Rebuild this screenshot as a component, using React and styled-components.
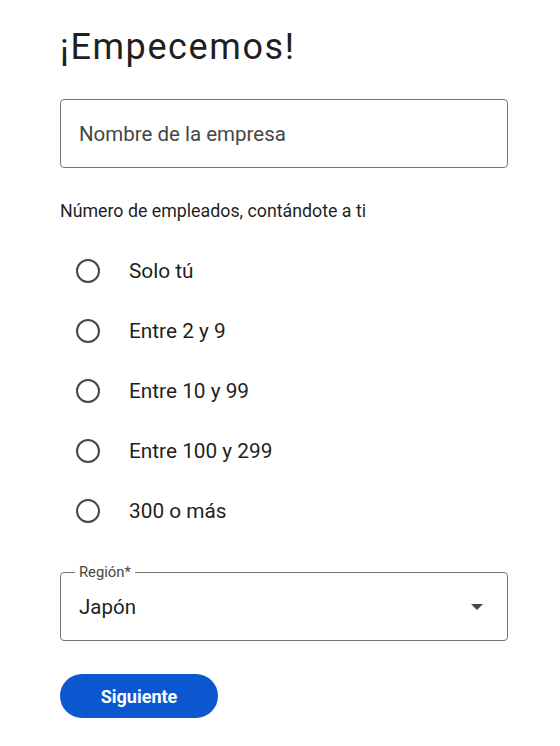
import React, { useState } from "react";
import styled, { createGlobalStyle } from "styled-components";

const GlobalStyle = createGlobalStyle`
  html, body {
    margin: 0;
    padding: 0;
    background: #ffffff;
  }
  body {
    font-family: Roboto, "Liberation Sans", sans-serif;
    color: #1f1f1f;
  }
`;

const options = ["Solo tú", "Entre 2 y 9", "Entre 10 y 99", "Entre 100 y 299", "300 o más"];

const App = () => {
  const [size, setSize] = useState(null);

  return (
    <>
      <GlobalStyle />
      <Page>
        <Title>¡Empecemos!</Title>

        <Field>
          <TextInput placeholder="Nombre de la empresa" />
        </Field>

        <GroupLabel>Número de empleados, contándote a ti</GroupLabel>
        <RadioList>
          {options.map((o) => (
            <RadioRow key={o} onClick={() => setSize(o)}>
              <RadioCircle checked={size === o} />
              <RadioText>{o}</RadioText>
            </RadioRow>
          ))}
        </RadioList>

        <SelectBox>
          <Legend>Región*</Legend>
          <SelectValue>Japón</SelectValue>
          <Arrow viewBox="0 0 12 6" aria-hidden="true">
            <path d="M0 0h12L6 6z" fill="#444746" />
          </Arrow>
        </SelectBox>

        <NextButton>Siguiente</NextButton>
      </Page>
    </>
  );
};

const Page = styled.div`
  display: flex;
  flex-direction: column;
  align-items: flex-start;
  padding: 27px 0 0 60px;
  width: 448px;
`;

const Title = styled.h1`
  margin: 0;
  font-family: Roboto, "Liberation Sans", sans-serif;
  font-size: 36px;
  line-height: 40px;
  font-weight: 400;
  letter-spacing: 1.6px;
  color: #1f1f1f;
`;

const Field = styled.div`
  margin-top: 32px;
  width: 100%;
`;

const TextInput = styled.input`
  box-sizing: border-box;
  width: 100%;
  height: 69px;
  border: 1px solid #747775;
  border-radius: 4px;
  padding: 0 18px;
  font-family: Roboto, "Liberation Sans", sans-serif;
  font-size: 20.5px;
  color: #1f1f1f;
  outline: none;
  &::placeholder {
    color: #444746;
  }
`;

const GroupLabel = styled.div`
  margin-top: 33px;
  font-size: 17.8px;
  line-height: 20px;
  color: #1f1f1f;
`;

const RadioList = styled.div`
  display: flex;
  flex-direction: column;
  margin-top: 20px;
`;

const RadioRow = styled.label`
  display: flex;
  align-items: center;
  height: 60px;
  padding-left: 16px;
  cursor: pointer;
`;

const RadioCircle = styled.span`
  box-sizing: border-box;
  width: 24px;
  height: 24px;
  border-radius: 50%;
  border: 2px solid #444746;
  position: relative;
  &::after {
    content: "";
    display: ${({ checked }) => (checked ? "block" : "none")};
    position: absolute;
    inset: 4px;
    border-radius: 50%;
    background: #0b57d0;
  }
`;

const RadioText = styled.span`
  margin-left: 29px;
  font-size: 20.8px;
  line-height: 24px;
  color: #1f1f1f;
`;

const SelectBox = styled.div`
  position: relative;
  box-sizing: border-box;
  margin-top: 31px;
  width: 100%;
  height: 69px;
  border: 1px solid #747775;
  border-radius: 4px;
  display: flex;
  align-items: center;
  justify-content: space-between;
  padding: 0 24px 0 18px;
`;

const Legend = styled.span`
  position: absolute;
  top: -10px;
  left: 14px;
  padding: 0 4px;
  background: #ffffff;
  font-size: 14.8px;
  line-height: 18px;
  color: #444746;
`;

const SelectValue = styled.span`
  font-size: 20.5px;
  color: #1f1f1f;
`;

const Arrow = styled.svg`
  width: 12px;
  height: 6px;
`;

const NextButton = styled.button`
  margin-top: 33px;
  width: 158px;
  height: 44px;
  border: none;
  border-radius: 22px;
  background: #0b57d0;
  color: #ffffff;
  font-family: Roboto, "Liberation Sans", sans-serif;
  font-size: 18px;
  font-weight: 700;
  cursor: pointer;
`;

export default App;
